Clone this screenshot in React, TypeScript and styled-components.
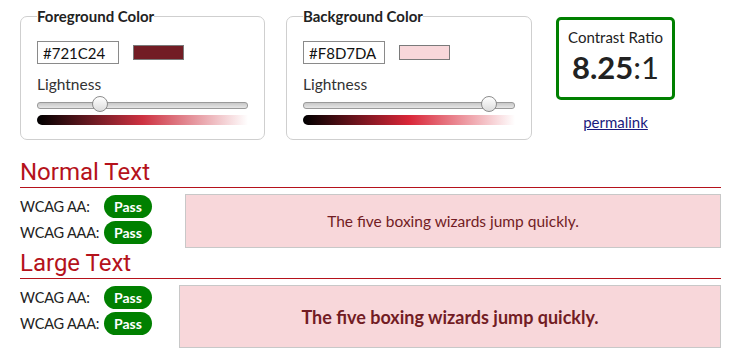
import React from "react";
import styled, { createGlobalStyle } from "styled-components";

const Global = createGlobalStyle`
  html, body { margin: 0; padding: 0; background: #fff; }
  body { font-family: Lato, "Open Sans", sans-serif; color: #222; }
`;

const Page = styled.div`
  width: 701px;
  padding: 0 12px 0 20px;
`;

const TopRow = styled.div`
  display: flex;
  align-items: flex-start;
`;

const ColorSet = styled.fieldset<{ $w: number; $mr: number }>`
  width: ${(p) => p.$w}px;
  box-sizing: border-box;
  margin: 8px ${(p) => p.$mr}px 0 0;
  padding: 16px 16px 14px;
  border: 1px solid #cfcfcf;
  border-radius: 7px;
  min-width: 0;
`;

const Legend = styled.legend`
  padding: 0;
  font-weight: 700;
  font-size: 15px;
  line-height: 17px;
  color: #222;
`;

const SwatchRow = styled.div`
  display: flex;
  align-items: center;
  gap: 14px;
`;

const HexInput = styled.input`
  width: 82px;
  height: 23px;
  box-sizing: border-box;
  border: 1px solid #8a8a8a;
  padding: 0 5px;
  font-family: Lato, sans-serif;
  font-size: 15px;
  color: #111;
  background: #fff;
  outline: none;
`;

const Swatch = styled.div<{ $c: string }>`
  width: 51px;
  height: 15px;
  box-sizing: border-box;
  border: 1px solid #7a7a7a;
  background: ${(p) => p.$c};
`;

const Label = styled.div`
  margin-top: 11px;
  font-size: 15.5px;
  line-height: 18px;
  color: #333;
`;

const Track = styled.div`
  position: relative;
  margin-top: 9px;
  height: 5px;
  border: 1px solid #9a9a9a;
  border-radius: 3px;
  background: linear-gradient(#c8c8c8, #e6e6e6);
`;

const Thumb = styled.div`
  position: absolute;
  top: -7px;
  width: 16px;
  height: 16px;
  box-sizing: border-box;
  margin-left: -8px;
  border-radius: 50%;
  border: 1px solid #8c8c8c;
  background: linear-gradient(#ffffff, #dcdcdc);
`;

const Gradient = styled.div<{ $h: number; $s: number }>`
  margin-top: 6px;
  height: 10px;
  border-radius: 5px 0 0 5px;
  background: linear-gradient(
    to right,
    hsl(${(p) => p.$h}, ${(p) => p.$s}%, 0%),
    hsl(${(p) => p.$h}, ${(p) => p.$s}%, 25%),
    hsl(${(p) => p.$h}, ${(p) => p.$s}%, 50%),
    hsl(${(p) => p.$h}, ${(p) => p.$s}%, 75%),
    hsl(${(p) => p.$h}, ${(p) => p.$s}%, 100%)
  );
`;

const RatioCol = styled.div`
  width: 119px;
  margin-top: 17px;
  display: flex;
  flex-direction: column;
  align-items: center;
`;

const RatioBox = styled.div`
  width: 119px;
  height: 83px;
  box-sizing: border-box;
  border: 3px solid #008000;
  border-radius: 5px;
  display: flex;
  flex-direction: column;
  align-items: center;
  padding-top: 8px;
`;

const RatioTitle = styled.div`
  font-size: 15px;
  line-height: 18px;
  color: #222;
`;

const RatioValue = styled.div`
  margin-top: 2px;
  font-size: 31px;
  line-height: 38px;
  font-weight: 700;
  color: #222;
`;

const RatioTail = styled.span`
  font-weight: 400;
`;

const Permalink = styled.a`
  margin-top: 13px;
  font-size: 15px;
  color: #1a1a7e;
  text-decoration: underline;
`;

const SectionTitle = styled.h2<{ $mt: number }>`
  margin: ${(p) => p.$mt}px 0 0;
  font-family: Roboto, sans-serif;
  font-weight: 400;
  font-size: 24px;
  line-height: 28px;
  color: #b5121b;
  border-bottom: 1px solid #b5121b;
  padding-bottom: 1px;
`;

const ResultRow = styled.div<{ $lw: number; $mt: number }>`
  display: grid;
  grid-template-columns: ${(p) => p.$lw}px 1fr;
  margin-top: ${(p) => p.$mt}px;
  align-items: stretch;
`;

const Checks = styled.div`
  display: flex;
  flex-direction: column;
  gap: 2px;
`;

const Check = styled.div`
  display: flex;
  align-items: center;
  height: 24px;
`;

const CheckLabel = styled.span`
  width: 84px;
  flex: none;
  white-space: nowrap;
  font-size: 14.5px;
  letter-spacing: -0.2px;
  color: #222;
`;

const Pill = styled.span`
  width: 48px;
  height: 23px;
  border-radius: 12px;
  background: #008000;
  color: #fff;
  font-weight: 700;
  font-size: 14px;
  display: flex;
  align-items: center;
  justify-content: center;
`;

const Sample = styled.div<{ $large?: boolean; $h: number }>`
  height: ${(p) => p.$h}px;
  box-sizing: border-box;
  border: 1px solid #c8c8c8;
  background: #f8d7da;
  color: #721c24;
  display: flex;
  align-items: center;
  justify-content: center;
  font-size: ${(p) => (p.$large ? 18 : 15.5)}px;
  font-weight: ${(p) => (p.$large ? 700 : 400)};
`;

function ColorPicker(props: {
  title: string;
  hex: string;
  h: number;
  s: number;
  l: number;
  w: number;
  mr: number;
}) {
  return (
    <ColorSet $w={props.w} $mr={props.mr}>
      <Legend>{props.title}</Legend>
      <SwatchRow>
        <HexInput defaultValue={props.hex} />
        <Swatch $c={props.hex} />
      </SwatchRow>
      <Label>Lightness</Label>
      <Track>
        <Thumb style={{ left: `calc(8px + (100% - 16px) * ${props.l / 100})` }} />
      </Track>
      <Gradient $h={props.h} $s={props.s} />
    </ColorSet>
  );
}

function Results(props: { lw: number; large?: boolean; h: number; mt: number }) {
  return (
    <ResultRow $lw={props.lw} $mt={props.mt}>
      <Checks>
        <Check>
          <CheckLabel>WCAG AA:</CheckLabel>
          <Pill>Pass</Pill>
        </Check>
        <Check>
          <CheckLabel>WCAG AAA:</CheckLabel>
          <Pill>Pass</Pill>
        </Check>
      </Checks>
      <Sample $large={props.large} $h={props.h}>
        The five boxing wizards jump quickly.
      </Sample>
    </ResultRow>
  );
}

export default function App() {
  return (
    <Page>
      <Global />
      <TopRow>
        <ColorPicker title="Foreground Color" hex="#721C24" h={354} s={61} l={28} w={245} mr={21} />
        <ColorPicker title="Background Color" hex="#F8D7DA" h={354} s={70} l={91} w={246} mr={24} />
        <RatioCol>
          <RatioBox>
            <RatioTitle>Contrast Ratio</RatioTitle>
            <RatioValue>
              8.25<RatioTail>:1</RatioTail>
            </RatioValue>
          </RatioBox>
          <Permalink href="#">permalink</Permalink>
        </RatioCol>
      </TopRow>
      <SectionTitle $mt={18}>Normal Text</SectionTitle>
      <Results lw={165} h={54} mt={6} />
      <SectionTitle $mt={1}>Large Text</SectionTitle>
      <Results lw={159} h={63} mt={6} large />
    </Page>
  );
}
